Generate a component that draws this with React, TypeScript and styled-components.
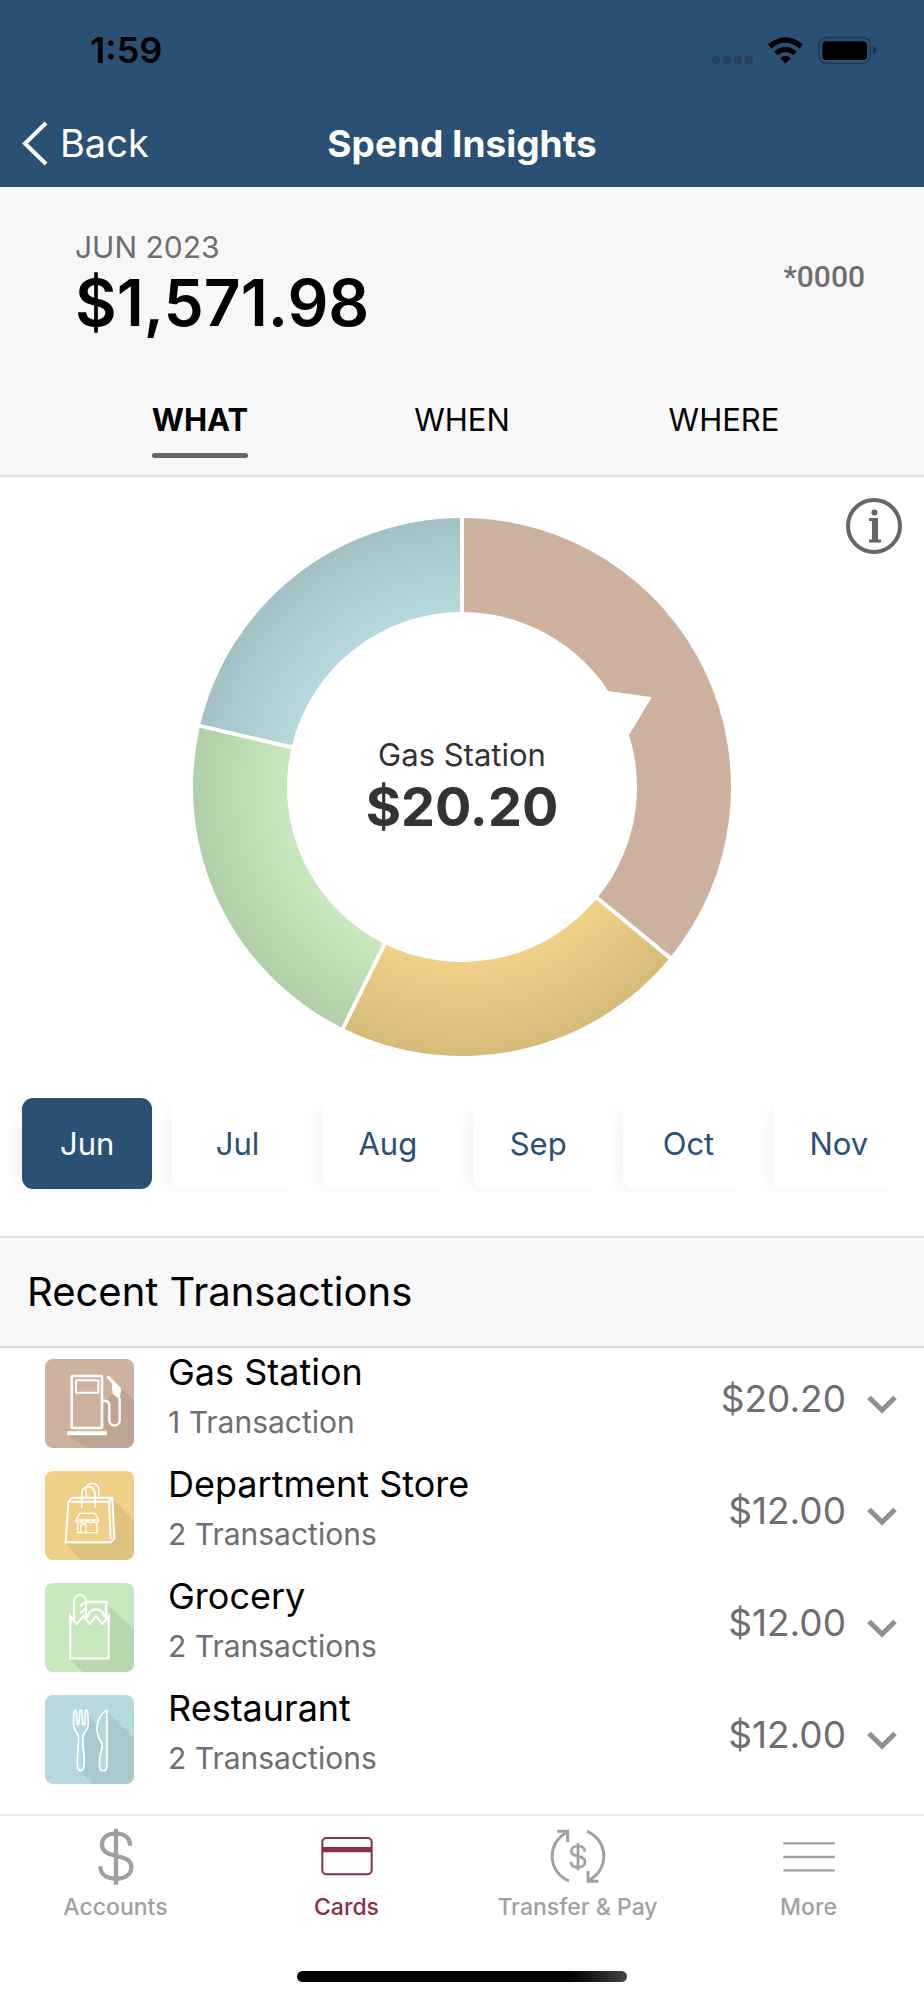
import React, { useState } from "react";
import styled, { createGlobalStyle } from "styled-components";

const NAVY = "#2a5073";
const MAROON = "#8a3044";
const SLATE = "#6d6d72";
const MUTED = "#a0a0a0";

const GlobalStyle = createGlobalStyle`
  * { box-sizing: border-box; }
  body { margin: 0; background: #fff; color: #000; font-family: Inter, "Liberation Sans", sans-serif; }
  button { font: inherit; color: inherit; background: none; border: 0; padding: 0; cursor: pointer; }
  h1, h2, h3, p, ul { margin: 0; padding: 0; font-weight: 400; }
  ul { list-style: none; }
  svg { display: block; }
`;

const Screen = styled.div`
  display: flex;
  flex-direction: column;
  min-height: 100vh;
`;

/* ---------- header ---------- */

const Header = styled.header`
  padding-bottom: 1px;
  background: ${NAVY};
`;

const StatusBar = styled.div`
  display: flex;
  align-items: center;
  justify-content: space-between;
  height: 100px;
  padding: 0 47px 0 90px;
`;

const Clock = styled.time`
  font-size: 36px;
  font-weight: 600;
`;

const StatusIcons = styled.div`
  display: flex;
  align-items: flex-end;
  gap: 15px;
`;

const SignalDots = styled.div`
  display: flex;
  gap: 3px;
`;

const Dot = styled.span`
  width: 8px;
  height: 8px;
  border-radius: 3px;
  background: #27415f;
`;

const NavBar = styled.nav`
  display: grid;
  grid-template-columns: 1fr auto 1fr;
  align-items: center;
  height: 86px;
  padding: 0 22px;
`;

const BackLink = styled.a`
  display: flex;
  align-items: center;
  justify-self: start;
  gap: 12px;
  color: #fff;
  font-size: 38px;
  font-weight: 400;
  text-decoration: none;
`;

const NavTitle = styled.h1`
  color: #fff;
  font-size: 37px;
  font-weight: 700;
`;

/* ---------- summary ---------- */

const Summary = styled.section`
  padding-top: 40px;
  background: #f7f7f7;
  border-bottom: 2px solid #e0e0e0;
`;

const SummaryRow = styled.div`
  display: flex;
  align-items: flex-start;
  justify-content: space-between;
  padding: 0 59px 0 75px;
`;

const Period = styled.p`
  color: ${SLATE};
  font-size: 30px;
  line-height: 40px;
`;

const Total = styled.p`
  font-size: 64px;
  font-weight: 600;
  line-height: 72px;
`;

const CardNumber = styled.p`
  padding-top: 30px;
  color: ${SLATE};
  font-family: Roboto, sans-serif;
  font-size: 30px;
  font-weight: 500;
  line-height: 40px;
`;

const Tabs = styled.div`
  display: grid;
  grid-template-columns: repeat(3, 1fr);
  justify-items: center;
  padding: 61px 69px 17px;
`;

const Tab = styled.button<{ $active: boolean }>`
  font-size: 31px;
  font-weight: ${(p) => (p.$active ? 700 : 400)};
  line-height: 40px;

  &::after {
    content: "";
    display: block;
    height: 5px;
    margin-top: 13px;
    border-radius: 3px;
    background: ${(p) => (p.$active ? "#666" : "transparent")};
  }
`;

/* ---------- chart ---------- */

const ChartSection = styled.section`
  display: grid;
  grid-template-columns: 1fr minmax(0, 538px) 1fr;
  padding: 21px 22px 42px;
`;

const Donut = styled.div`
  display: grid;
  grid-column: 2;
  place-items: center;
  margin-top: 20px;

  > * {
    grid-area: 1 / 1;
  }

  svg {
    width: 100%;
    height: auto;
  }
`;

const DonutLabel = styled.div`
  color: #333;
  text-align: center;
`;

const DonutName = styled.p`
  font-size: 31px;
  line-height: 40px;
`;

const DonutAmount = styled.p`
  font-size: 54px;
  font-weight: 700;
  line-height: 64px;
`;

const InfoButton = styled.button`
  grid-column: 3;
  align-self: start;
  justify-self: end;
`;

/* ---------- months ---------- */

const Months = styled.div`
  display: flex;
  gap: 20px;
  margin-bottom: 44px;
  padding: 0 20px 3px 22px;
  overflow: hidden;
`;

const Month = styled.button<{ $active: boolean }>`
  flex: 1;
  height: 91px;
  border-radius: 11px;
  background: ${(p) => (p.$active ? NAVY : "#fff")};
  box-shadow: -10px 6px 20px -6px rgba(0, 0, 0, 0.06);
  color: ${(p) => (p.$active ? "#fff" : NAVY)};
  font-size: 31px;
  font-weight: 400;
`;

/* ---------- transactions ---------- */

const SectionTitle = styled.h2`
  padding: 0 27px;
  background: #f7f7f7;
  border-top: 2px solid #e5e5e5;
  border-bottom: 2px solid #d8d8d8;
  font-size: 40px;
  line-height: 108px;
`;

const TransactionList = styled.ul`
  padding-bottom: 18px;
`;

const Row = styled.li`
  display: flex;
  align-items: center;
  height: 112px;
  padding: 0 27px 1px 45px;
`;

const Tile = styled.svg`
  flex: none;
  width: 89px;
  height: 89px;
  border-radius: 8px;
  fill: none;
  stroke: #fff;
  stroke-linejoin: round;
`;

const RowText = styled.div`
  flex: 1;
  padding: 0 20px 17px 34px;
`;

const RowName = styled.h3`
  font-size: 36px;
  line-height: 48px;
`;

const RowCount = styled.p`
  margin-top: 6px;
  color: ${SLATE};
  font-size: 30px;
  line-height: 40px;
`;

const RowAmount = styled.p`
  padding: 0 21px 9px 0;
  color: ${SLATE};
  font-size: 37px;
  line-height: 48px;
`;

/* ---------- tab bar ---------- */

const TabBar = styled.footer`
  margin-top: auto;
  padding: 12px 0 18px;
  border-top: 2px solid #eaeaea;
`;

const TabBarItems = styled.nav`
  display: grid;
  grid-template-columns: repeat(4, 1fr);
`;

const TabBarLink = styled.a<{ $active?: boolean }>`
  display: flex;
  flex-direction: column;
  align-items: center;
  gap: 7px;
  color: ${(p) => (p.$active ? MAROON : MUTED)};
  font-size: 23px;
  font-weight: 500;
  line-height: 28px;
  text-decoration: none;
`;

const HomeIndicator = styled.div`
  width: 330px;
  height: 11px;
  margin: 50px auto 0;
  border-radius: 6px;
  background: linear-gradient(to right, #000 83%, #444);
`;

/* ---------- data ---------- */

type Category = {
  id: string;
  name: string;
  count: number;
  amount: number;
  color: string;
  edge: string;
  shadow: string;
  art: React.ReactNode;
};

const categories: Category[] = [
  {
    id: "gas",
    name: "Gas Station",
    count: 1,
    amount: 20.2,
    color: "#ccb19f",
    edge: "#ccb19f",
    shadow: "227,86 267,122 267,267 127,267 67,229 186,229 186,211 175,207 175,130",
    art: (
      <>
        <rect x="80" y="51" width="91" height="156" rx="3" strokeWidth="8" />
        <rect x="93" y="64" width="67" height="37" strokeWidth="6" />
        <path d="M67 223H186" strokeWidth="12" />
        <path d="M173 126h7q13 0 13 14v44a15 15 0 0 0 31 0v-66" strokeWidth="7" />
        <path d="M187 52L226 92" strokeWidth="9" />
        <path d="M200 74L228 92L224 121L203 104Z" fill="#fff" stroke="none" />
      </>
    ),
  },
  {
    id: "department",
    name: "Department Store",
    count: 2,
    amount: 12,
    color: "#f0d088",
    edge: "#d6ba78",
    shadow: "203,84 267,150 267,267 108,267 62,217 198,217 209,202",
    art: (
      <>
        <path d="M70 92L62 214H198L208 203L202 80H82L70 92H192L202 80M192 92L197 204" strokeWidth="6" />
        <path d="M110 111V67a20 20 0 0 1 40 0V111" strokeWidth="5" />
        <path d="M123 78V56a19 19 0 0 1 38 0V82" strokeWidth="5" />
        <path d="M104 127H150L161 147H93Z" strokeWidth="4" />
        <path
          d="M93 147a8.5 8 0 0 0 17 0a8.5 8 0 0 0 17 0a8.5 8 0 0 0 17 0a8.5 8 0 0 0 17 0"
          strokeWidth="4"
        />
        <path d="M98 156V185H156V156M107 185V166q0-7 8-7t8 7V185" strokeWidth="4" />
      </>
    ),
  },
  {
    id: "grocery",
    name: "Grocery",
    count: 2,
    amount: 12,
    color: "#c7e8bc",
    edge: "#b1cfa8",
    shadow: "185,62 267,140 267,267 113,267 76,230 194,230 194,98 185,98",
    art: (
      <>
        <path
          d="M76 100L95 123L115 100L134 123L153 100L172 123L191 100V226H76Z"
          strokeLinejoin="miter"
          strokeWidth="7"
        />
        <path d="M87 110V54a18 18 0 0 1 36 0V106" strokeWidth="7" />
        <path d="M105 70L121 56M105 92L121 76" strokeWidth="6" />
        <path d="M125 57H184V104M126 106A27 27 0 0 1 180 106" strokeWidth="7" />
      </>
    ),
  },
  {
    id: "restaurant",
    name: "Restaurant",
    count: 2,
    amount: 12,
    color: "#b6d9de",
    edge: "#a3c1c5",
    shadow:
      "130,58 157,90 154,105 171,145 162,200 166,224 175,229 187,214 187,50 267,128 267,267 142,267 105,228 118,218 114,140 130,100",
    art: (
      <>
        <path
          d="M88 48Q84 78 86 92Q88 106 97 115Q102 120 101 132L97 192Q95 227 107 227Q120 227 118 192L113 132Q112 120 117 115Q127 106 129 92Q131 78 127 48Q124 43 121 48L119 86Q116 93 113 86L110 48Q107 43 104 48L102 86Q99 93 96 86L94 48Q91 43 88 48Z"
          strokeWidth="5"
        />
        <path
          d="M186 46V210Q186 228 175 228Q163 228 163 210Q163 184 170 162Q174 150 169 142Q155 124 156 98Q158 60 186 46Z"
          strokeWidth="5"
        />
      </>
    ),
  },
];

const months = ["Jun", "Jul", "Aug", "Sep", "Oct", "Nov"];
const money = (n: number) => `$${n.toFixed(2)}`;

/* ---------- donut geometry ---------- */

const CENTER = 269;
const OUTER = 269;
const INNER = 175;

const polar = (radius: number, angle: number) => {
  const rad = (angle * Math.PI) / 180;
  return `${(CENTER + radius * Math.sin(rad)).toFixed(2)} ${(CENTER - radius * Math.cos(rad)).toFixed(2)}`;
};

const slicePath = (from: number, to: number) =>
  `M${polar(OUTER, from)}A${OUTER} ${OUTER} 0 0 1 ${polar(OUTER, to)}` +
  `L${polar(INNER, to)}A${INNER} ${INNER} 0 0 0 ${polar(INNER, from)}Z`;

function DonutChart() {
  const total = categories.reduce((sum, c) => sum + c.amount, 0);
  let start = 0;
  const slices = categories.map((c) => {
    const from = start;
    start += (c.amount / total) * 360;
    return { ...c, from, to: start };
  });
  const middle = slices[0].to / 2;

  return (
    <svg viewBox="0 0 538 538" role="img" aria-label="Spending by category">
      <defs>
        {slices.map((s) => (
          <radialGradient
            key={s.id}
            id={`slice-${s.id}`}
            gradientUnits="userSpaceOnUse"
            cx={CENTER}
            cy={CENTER}
            r={OUTER}
          >
            <stop offset="0.66" stopColor={s.color} />
            <stop offset="1" stopColor={s.edge} />
          </radialGradient>
        ))}
      </defs>
      {slices.map((s) => (
        <path key={s.id} d={slicePath(s.from, s.to)} fill={`url(#slice-${s.id})`} />
      ))}
      {slices.map((s) => (
        <path
          key={s.id}
          d={`M${polar(INNER - 2, s.from)}L${polar(OUTER + 1, s.from)}`}
          stroke="#fff"
          strokeWidth="4"
        />
      ))}
      <path
        d={`M${polar(INNER, middle - 8)}L${polar(210, middle)}L${polar(INNER, middle + 8)}L${polar(INNER - 8, middle)}Z`}
        fill="#fff"
      />
    </svg>
  );
}

/* ---------- icons ---------- */

const WifiIcon = () => (
  <svg width="35" height="27" viewBox="0 0 106 81" fill="none" stroke="#000">
    <path d="M5 28Q53 -11 101 28" strokeWidth="16" />
    <path d="M24 49Q53 25 82 49" strokeWidth="15" />
    <path d="M37 65Q53 50 69 65L53 80Z" fill="#000" stroke="none" />
  </svg>
);

const BatteryIcon = () => (
  <svg width="59" height="27" viewBox="0 0 177 82">
    <rect x="2" y="2" width="156" height="78" rx="22" fill="none" stroke="#1c3650" strokeWidth="4" />
    <rect x="12" y="13" width="136" height="57" rx="12" />
    <path d="M166 27q10 4 10 14t-10 14z" fill="#1c3650" />
  </svg>
);

const BackIcon = () => (
  <svg width="26" height="45" viewBox="0 0 26 45" fill="none" stroke="#fff" strokeWidth="4">
    <path d="M24 2L3 22.5L24 43" />
  </svg>
);

const InfoIcon = () => (
  <svg width="56" height="56" viewBox="0 0 56 56" fill="none" stroke="#666">
    <circle cx="28" cy="28" r="26" strokeWidth="4" />
    <circle cx="28.5" cy="14.5" r="3" fill="#666" stroke="none" />
    <path d="M23 21.5H29V43M23 43H35" strokeWidth="3" />
    <path d="M29 20V44" strokeWidth="6" />
  </svg>
);

const ChevronIcon = () => (
  <svg width="30" height="20" viewBox="0 0 30 20" fill="none" stroke="#8e8e90" strokeWidth="5">
    <path d="M2 3.5L15 16L28 3.5" />
  </svg>
);

const BarIcon = ({ children }: { children: React.ReactNode }) => (
  <svg width="56" height="58" viewBox="-84 0 168 174" fill="none" stroke="currentColor" aria-hidden="true">
    {children}
  </svg>
);

const AccountsIcon = () => (
  <BarIcon>
    <path
      d="M42 53C42 28 25 17 0 17C-25 17 -42 29 -42 50C-42 96 46 72 46 117C46 140 27 152 0 152C-30 152 -47 138 -47 115M0 2V170"
      strokeWidth="13"
    />
  </BarIcon>
);

const CardsIcon = () => (
  <BarIcon>
    <rect x="-74" y="30" width="148" height="109" rx="12" strokeWidth="6" />
    <path d="M-74 65H74" strokeWidth="16" />
  </BarIcon>
);

const TransferIcon = () => (
  <BarIcon>
    <path d="M-27 159A80 80 0 0 1 -31 12M27 10A80 80 0 0 1 31 157" strokeWidth="9" />
    <path d="M-62 10H-31V42M61 160H30V129" strokeWidth="9" />
    <path
      d="M20 71C20 60 12 54 0 54C-12 54 -20 60 -20 69C-20 92 21 78 21 101C21 112 12 118 0 118C-13 118 -21 112 -21 101M0 45V127"
      strokeWidth="8"
    />
  </BarIcon>
);

const MoreIcon = () => (
  <BarIcon>
    <path d="M-77 46H77M-77 87H77M-77 127H77" strokeWidth="7" />
  </BarIcon>
);

/* ---------- page ---------- */

export default function App() {
  const [tab, setTab] = useState("WHAT");
  const [month, setMonth] = useState("Jun");

  return (
    <Screen>
      <GlobalStyle />
      <Header>
        <StatusBar>
          <Clock>1:59</Clock>
          <StatusIcons>
            <SignalDots>
              <Dot />
              <Dot />
              <Dot />
              <Dot />
            </SignalDots>
            <WifiIcon />
            <BatteryIcon />
          </StatusIcons>
        </StatusBar>
        <NavBar>
          <BackLink href="#back">
            <BackIcon />
            Back
          </BackLink>
          <NavTitle>Spend Insights</NavTitle>
        </NavBar>
      </Header>

      <main>
        <Summary>
          <SummaryRow>
            <div>
              <Period>JUN 2023</Period>
              <Total>$1,571.98</Total>
            </div>
            <CardNumber>*0000</CardNumber>
          </SummaryRow>
          <Tabs role="tablist">
            {["WHAT", "WHEN", "WHERE"].map((t) => (
              <Tab key={t} role="tab" aria-selected={t === tab} $active={t === tab} onClick={() => setTab(t)}>
                {t}
              </Tab>
            ))}
          </Tabs>
        </Summary>

        <ChartSection>
          <Donut>
            <DonutChart />
            <DonutLabel>
              <DonutName>Gas Station</DonutName>
              <DonutAmount>$20.20</DonutAmount>
            </DonutLabel>
          </Donut>
          <InfoButton aria-label="Information">
            <InfoIcon />
          </InfoButton>
        </ChartSection>

        <Months>
          {months.map((m) => (
            <Month key={m} $active={m === month} onClick={() => setMonth(m)}>
              {m}
            </Month>
          ))}
        </Months>

        <SectionTitle>Recent Transactions</SectionTitle>
        <TransactionList>
          {categories.map((c) => (
            <Row key={c.id}>
              <Tile viewBox="0 0 267 267" aria-hidden="true">
                <rect width="267" height="267" fill={c.color} stroke="none" />
                <polygon points={c.shadow} fill="#000" fillOpacity="0.07" stroke="none" />
                {c.art}
              </Tile>
              <RowText>
                <RowName>{c.name}</RowName>
                <RowCount>
                  {c.count} {c.count === 1 ? "Transaction" : "Transactions"}
                </RowCount>
              </RowText>
              <RowAmount>{money(c.amount)}</RowAmount>
              <button aria-label={`Show ${c.name} transactions`}>
                <ChevronIcon />
              </button>
            </Row>
          ))}
        </TransactionList>
      </main>

      <TabBar>
        <TabBarItems>
          <TabBarLink href="#accounts">
            <AccountsIcon />
            Accounts
          </TabBarLink>
          <TabBarLink href="#cards" $active aria-current="page">
            <CardsIcon />
            Cards
          </TabBarLink>
          <TabBarLink href="#transfer">
            <TransferIcon />
            Transfer &amp; Pay
          </TabBarLink>
          <TabBarLink href="#more">
            <MoreIcon />
            More
          </TabBarLink>
        </TabBarItems>
        <HomeIndicator />
      </TabBar>
    </Screen>
  );
}
